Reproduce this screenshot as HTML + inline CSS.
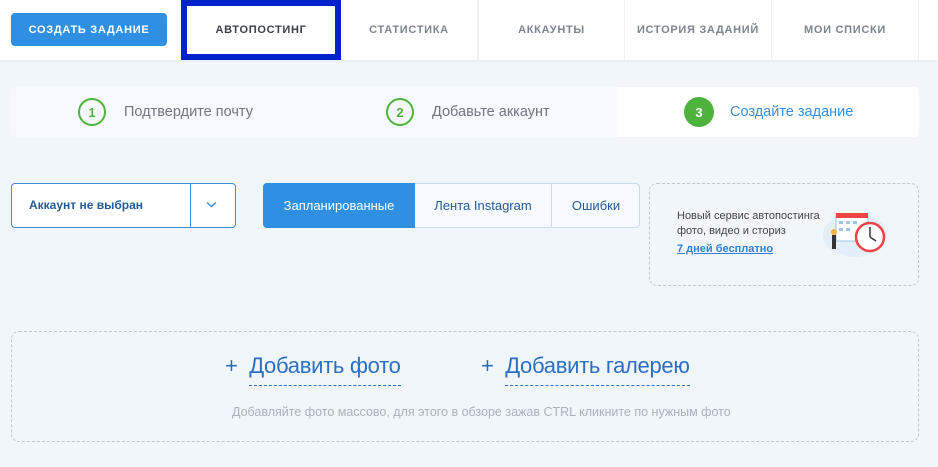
<!DOCTYPE html>
<html><head><meta charset="utf-8"><style>
*{box-sizing:border-box;margin:0;padding:0}
body{width:938px;height:467px;background:#f1f6fb;font-family:"Liberation Sans","DejaVu Sans",sans-serif;position:relative;overflow:hidden}
.a{position:absolute}
.nav{left:0;top:0;width:938px;height:60px;background:#fff;box-shadow:0 1px 3px rgba(0,0,0,.06)}
.tab{top:0;height:60px;display:flex;align-items:center;justify-content:center;font-size:11px;font-weight:bold;letter-spacing:.7px;color:#7c8490;border-right:1px solid #eef0f3}
.btn{left:11px;top:13px;width:156px;height:33px;background:#2f8fe3;border-radius:4px;color:#fff;font-size:11px;font-weight:bold;letter-spacing:.7px;display:flex;align-items:center;justify-content:center}
.steps{left:11px;top:87px;width:908px;height:50px;background:#f6f9fd;border-radius:4px}
.circ{width:28px;height:28px;border-radius:50%;border:2px solid #4db33d;color:#4db33d;font-size:13px;font-weight:bold;display:flex;align-items:center;justify-content:center}
.st{font-size:14.5px;color:#6f7680}
</style></head><body>
<div class="a nav"></div>
<div class="a btn">СОЗДАТЬ ЗАДАНИЕ</div>
<div class="a tab" style="left:181px;width:160px;border:6px solid #0022cc;color:#3a3f47">АВТОПОСТИНГ</div>
<div class="a tab" style="left:341px;width:137px">СТАТИСТИКА</div>
<div class="a tab" style="left:478px;width:147px;border-left:1px solid #eef0f3">АККАУНТЫ</div>
<div class="a tab" style="left:625px;width:147px">ИСТОРИЯ ЗАДАНИЙ</div>
<div class="a tab" style="left:772px;width:147px">МОИ СПИСКИ</div>

<div class="a steps"></div>
<div class="a" style="left:617px;top:87px;width:302px;height:50px;background:#fff;border-radius:0 4px 4px 0"></div>
<div class="a circ" style="left:78px;top:98px">1</div>
<div class="a st" style="left:124px;top:104px">Подтвердите почту</div>
<div class="a circ" style="left:386px;top:98px">2</div>
<div class="a st" style="left:432px;top:104px">Добавьте аккаунт</div>
<div class="a circ" style="left:684px;top:97px;width:30px;height:30px;background:#4db33d;color:#fff;border:none">3</div>
<div class="a st" style="left:730px;top:104px;color:#3a8fd8">Создайте задание</div>

<div class="a" style="left:11px;top:183px;width:225px;height:45px;background:#fff;border:1px solid #3a8fd8;border-radius:4px"></div>
<div class="a" style="left:190px;top:183px;width:1px;height:45px;background:#3a8fd8"></div>
<div class="a" style="left:29px;top:198px;font-size:12px;font-weight:bold;color:#235a9a">Аккаунт не выбран</div>
<svg class="a" style="left:206px;top:201px" width="11" height="8"><path d="M1 1.5l4.5 4 4.5-4" fill="none" stroke="#3a8fd8" stroke-width="1.5"/></svg>

<div class="a" style="left:263px;top:183px;width:377px;height:45px;background:#f6f9fd;border:1px solid #c8dcf0;border-radius:4px"></div>
<div class="a" style="left:263px;top:183px;width:152px;height:45px;background:#2f8fe3;border-radius:4px 0 0 4px;color:#fff;font-size:13px;display:flex;align-items:center;justify-content:center">Запланированные</div>
<div class="a" style="left:415px;top:183px;width:137px;height:45px;border-right:1px solid #c8dcf0;color:#235a9a;font-size:13px;display:flex;align-items:center;justify-content:center">Лента Instagram</div>
<div class="a" style="left:552px;top:183px;width:88px;height:45px;color:#235a9a;font-size:13px;display:flex;align-items:center;justify-content:center">Ошибки</div>

<div class="a" style="left:649px;top:183px;width:270px;height:103px;border:1px dashed #bfc6cf;border-radius:8px"></div>
<div class="a" style="left:677px;top:209px;font-size:11px;line-height:15px;color:#444">Новый сервис автопостинга<br>фото, видео и сториз</div>
<div class="a" style="left:677px;top:243px;font-size:11px;font-weight:bold;color:#2f7fd6;text-decoration:underline">7 дней бесплатно</div>
<svg class="a" style="left:820px;top:205px" width="70" height="55">
<ellipse cx="35" cy="30" rx="32" ry="22" fill="#e3eef8"/>
<rect x="16" y="10" width="32" height="26" fill="#fff" stroke="#9cc6e8"/>
<rect x="16" y="8" width="32" height="5" fill="#e44"/>
<g fill="#9cc6e8"><rect x="19" y="16" width="4" height="3"/><rect x="26" y="16" width="4" height="3"/><rect x="33" y="16" width="4" height="3"/><rect x="19" y="23" width="4" height="3"/><rect x="26" y="23" width="4" height="3"/></g>
<circle cx="50" cy="32" r="14" fill="#fff" stroke="#e44" stroke-width="2.5"/>
<path d="M50 32V22M50 32l6 4" stroke="#333" stroke-width="1.5"/>
<rect x="12" y="30" width="4" height="14" fill="#333"/><circle cx="14" cy="27" r="3" fill="#f2b33d"/>
</svg>

<div class="a" style="left:11px;top:331px;width:908px;height:111px;border:1px dashed #bfc6cf;border-radius:8px"></div>
<div class="a" style="left:225px;top:353px;font-size:22px;color:#2a6fc4;letter-spacing:-0.3px">+&nbsp; <span style="border-bottom:1px dashed #2a6fc4;padding-bottom:7px">Добавить фото</span></div>
<div class="a" style="left:481px;top:353px;font-size:22px;color:#2a6fc4;letter-spacing:-0.3px">+&nbsp; <span style="border-bottom:1px dashed #2a6fc4;padding-bottom:7px">Добавить галерею</span></div>
<div class="a" style="left:232px;top:405px;font-size:12.5px;color:#aab1ba">Добавляйте фото массово, для этого в обзоре зажав CTRL кликните по нужным фото</div>
</body></html>
